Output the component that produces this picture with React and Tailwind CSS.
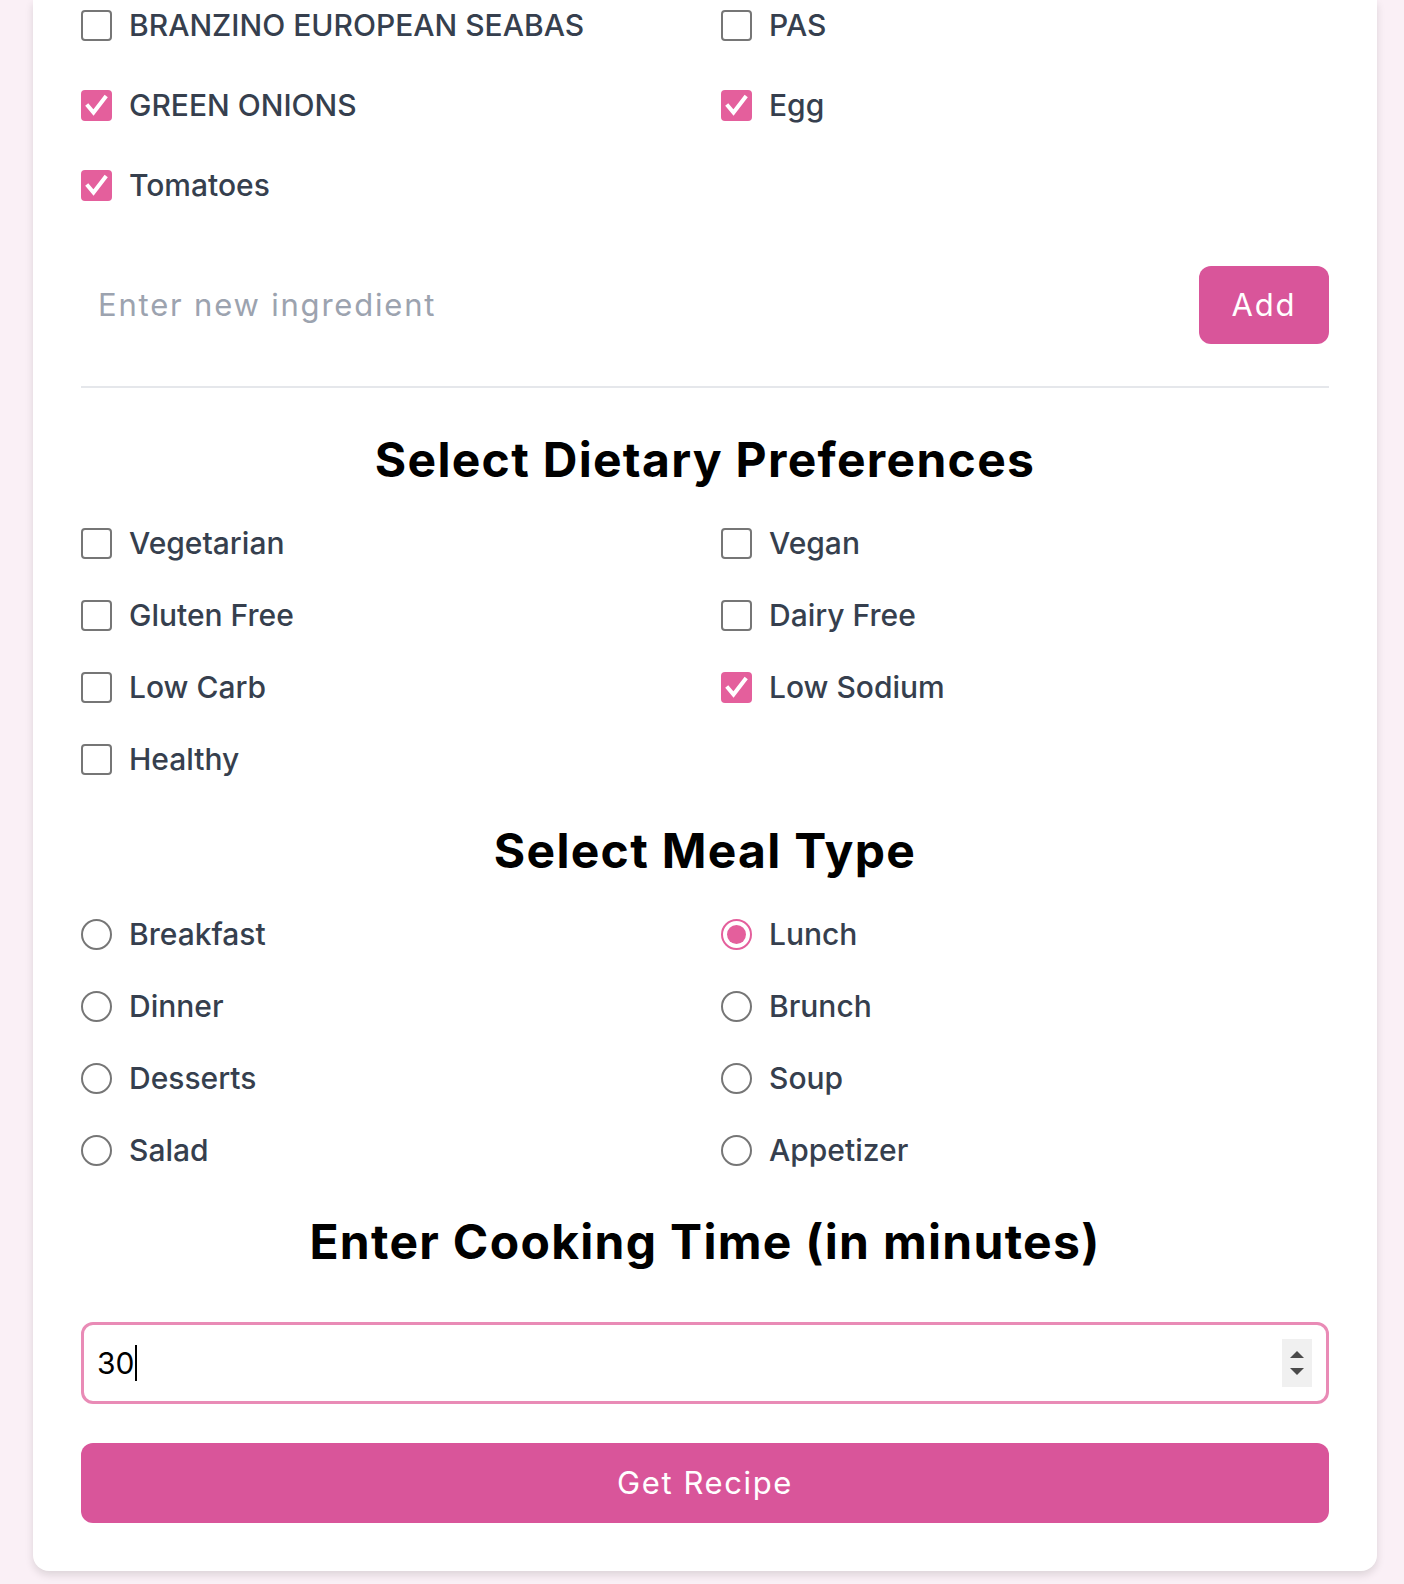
import React from "react";

const ingredients = [
  ["BRANZINO EUROPEAN SEABAS", false],
  ["PAS", false],
  ["GREEN ONIONS", true],
  ["Egg", true],
  ["Tomatoes", true],
];

const diets = [
  ["Vegetarian", false],
  ["Vegan", false],
  ["Gluten Free", false],
  ["Dairy Free", false],
  ["Low Carb", false],
  ["Low Sodium", true],
  ["Healthy", false],
];

const meals = [
  ["Breakfast", false],
  ["Lunch", true],
  ["Dinner", false],
  ["Brunch", false],
  ["Desserts", false],
  ["Soup", false],
  ["Salad", false],
  ["Appetizer", false],
];

function Box({ checked }) {
  if (checked) {
    return (
      <span className="flex h-[31px] w-[31px] shrink-0 items-center justify-center rounded-[4px] bg-[#e45f9c]">
        <svg width="31" height="31" viewBox="0 0 31 31">
          <polyline points="7,16 12.5,22.5 24,7.5" fill="none" stroke="white" strokeWidth="4" strokeLinecap="square" strokeLinejoin="miter" />
        </svg>
      </span>
    );
  }
  return <span className="block h-[31px] w-[31px] shrink-0 rounded-[4px] border-2 border-[#767676] bg-white" />;
}

function Radio({ checked }) {
  if (checked) {
    return (
      <span className="flex h-[31px] w-[31px] shrink-0 items-center justify-center rounded-full border-2 border-[#e45f9c] bg-white">
        <span className="block h-[19px] w-[19px] rounded-full bg-[#e45f9c]" />
      </span>
    );
  }
  return <span className="block h-[31px] w-[31px] shrink-0 rounded-full border-2 border-[#767676] bg-white" />;
}

function Item({ label, checked, radio, h }) {
  return (
    <div className={`flex items-center gap-[17px] ${h}`}>
      {radio ? <Radio checked={checked} /> : <Box checked={checked} />}
      <span className="text-[30px] font-medium text-[#363f4e] leading-none">{label}</span>
    </div>
  );
}

function Heading({ children }) {
  return (
    <h2 className="text-center text-[48px] font-bold leading-[58px] tracking-[1.3px] text-black">{children}</h2>
  );
}

export default function App() {
  return (
    <div className="min-h-screen bg-[#faf0f6] pl-[33px] pr-[27px] pb-[13px] [font-family:Inter,'Noto_Sans',sans-serif]">
      <div className="rounded-b-2xl bg-white px-12 pb-12 shadow-[0_4px_8px_rgba(0,0,0,0.12)]">
        <div className="grid grid-cols-2 gap-x-8 gap-y-[30px]">
          {ingredients.map(([l, c]) => (
            <Item key={l} label={l} checked={c} h="h-[50px]" />
          ))}
        </div>

        <div className="mt-[56px] flex items-center gap-4">
          <div className="flex h-[78px] flex-1 items-center px-[17px] text-[31px] tracking-[1.8px] text-[#9ca3af]">
            Enter new ingredient
          </div>
          <button className="h-[78px] w-[130px] rounded-xl bg-[#d9559a] text-[31px] tracking-[1.8px] text-white">Add</button>
        </div>

        <div className="mt-[42px] h-[2px] bg-[#e5e7eb]" />

        <div className="mt-[43px]">
          <Heading>Select Dietary Preferences</Heading>
        </div>
        <div className="mt-[34px] grid grid-cols-2 gap-x-8 gap-y-[32px]">
          {diets.map(([l, c]) => (
            <Item key={l} label={l} checked={c} h="h-[40px]" />
          ))}
        </div>

        <div className="mt-[43px]">
          <Heading>Select Meal Type</Heading>
        </div>
        <div className="mt-[34px] grid grid-cols-2 gap-x-8 gap-y-[32px]">
          {meals.map(([l, c]) => (
            <Item key={l} label={l} checked={c} radio h="h-[40px]" />
          ))}
        </div>

        <div className="mt-[43px]">
          <Heading>Enter Cooking Time (in minutes)</Heading>
        </div>

        <div className="relative mt-[51px] flex h-[82px] items-center rounded-xl border-[3px] border-[#e98bb6] px-[13px]">
          <span className="text-[30px] text-black">30</span>
          <span className="ml-[1px] block h-[36px] w-[2px] bg-black" />
          <div className="absolute right-[14px] top-[14px] flex h-[48px] w-[30px] flex-col items-center justify-center gap-[10px] bg-[#f0f0f0]">
            <span className="block h-0 w-0 border-x-[7px] border-b-[7px] border-x-transparent border-b-[#4a4a4a]" />
            <span className="block h-0 w-0 border-x-[7px] border-t-[7px] border-x-transparent border-t-[#4a4a4a]" />
          </div>
        </div>

        <button className="mt-[39px] flex h-[80px] w-full items-center justify-center rounded-xl bg-[#d9559a] text-[31px] tracking-[1.6px] text-white">
          Get Recipe
        </button>
      </div>
    </div>
  );
}
